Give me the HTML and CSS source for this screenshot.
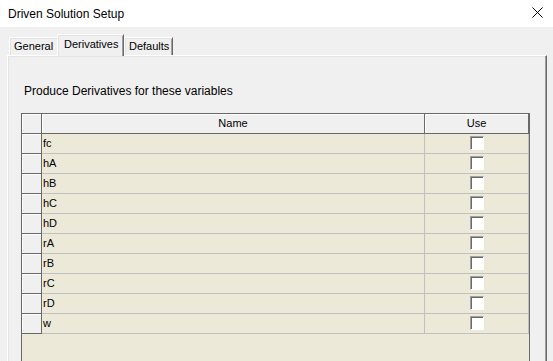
FILE: index.html
```html
<!DOCTYPE html>
<html lang="en">
<head>
  <meta charset="UTF-8">
  <title>Driven Solution Setup</title>
  <link rel="stylesheet" href="styles.css">
</head>
<body>
  <!-- Title bar -->
  <div class="titlebar">
    <span class="title">Driven Solution Setup</span>
    <svg class="close" width="11" height="11" viewBox="0 0 11 11">
      <path d="M0.5 0.5 L10.5 10.5 M10.5 0.5 L0.5 10.5" stroke="#000" stroke-width="1" fill="none"/>
    </svg>
  </div>

  <!-- Tabs -->
  <div class="tabs">
    <div class="tab tab-general">General</div>
    <div class="tab tab-active">Derivatives</div>
    <div class="tab tab-defaults">Defaults</div>
  </div>

  <div class="panel">
    <div class="label">Produce Derivatives for these variables</div>

    <div class="grid">
      <div class="hd"></div>
      <div class="hd">Name</div>
      <div class="hd hd-last">Use</div>

      <div class="rh"></div><div class="cell">fc</div><div class="cell use"><span class="box"></span></div>
      <div class="rh"></div><div class="cell">hA</div><div class="cell use"><span class="box"></span></div>
      <div class="rh"></div><div class="cell">hB</div><div class="cell use"><span class="box"></span></div>
      <div class="rh"></div><div class="cell">hC</div><div class="cell use"><span class="box"></span></div>
      <div class="rh"></div><div class="cell">hD</div><div class="cell use"><span class="box"></span></div>
      <div class="rh"></div><div class="cell">rA</div><div class="cell use"><span class="box"></span></div>
      <div class="rh"></div><div class="cell">rB</div><div class="cell use"><span class="box"></span></div>
      <div class="rh"></div><div class="cell">rC</div><div class="cell use"><span class="box"></span></div>
      <div class="rh"></div><div class="cell">rD</div><div class="cell use"><span class="box"></span></div>
      <div class="rh"></div><div class="cell">w</div><div class="cell use"><span class="box"></span></div>
    </div>
  </div>
</body>
</html>
```

FILE: styles.css
```css
html, body {
  margin: 0;
  height: 100%;
  overflow: hidden;
}
body {
  background: #f0f0f0;
  font-family: "Liberation Sans", Arial, sans-serif;
  font-size: 11px;
  color: #000;
}
.titlebar {
  height: 27px;
  background: #ffffff;
  display: flex;
  align-items: center;
  justify-content: space-between;
  padding: 0 10px 0 8px;
}
.title {
  font-size: 12px;
}
.close {
  display: block;
  margin-top: -2px;
}
.tabs {
  display: flex;
  align-items: flex-end;
  padding-left: 9px;
  margin-top: 7px;
  height: 21px;
}
.tab {
  box-sizing: border-box;
  height: 18px;
  line-height: 17px;
  background: #f0f0f0;
  border-top: 1px solid #ffffff;
  border-left: 1px solid #ffffff;
  box-shadow: inset 1px 1px #e3e3e3;
  padding-left: 4px;
}
.tab-general {
  width: 48px;
}
.tab-active {
  position: relative;
  z-index: 1;
  width: 67px;
  height: 22px;
  margin-bottom: -1px;
  padding-left: 6px;
  line-height: 19px;
  border-right: 1px solid #696969;
  box-shadow: inset 1px 1px #e3e3e3, inset -1px 0 #a0a0a0;
}
.tab-defaults {
  width: 49px;
  border-right: 1px solid #696969;
  box-shadow: inset 1px 1px #e3e3e3, inset -1px 0 #a0a0a0;
}
.panel {
  box-sizing: border-box;
  width: 540px;
  margin-left: 7px;
  height: 320px;
  border-top: 1px solid #ffffff;
  border-left: 1px solid #ffffff;
  border-right: 1px solid #696969;
  box-shadow: inset -1px 0 #a0a0a0, inset 1px 1px #e3e3e3;
  padding: 29px 0 0 13px;
}
.label {
  font-size: 12px;
  line-height: 12px;
  margin-bottom: 16px;
  padding-left: 3px;
}
.grid {
  display: grid;
  grid-template-columns: 20px 383px 104px;
  grid-auto-rows: 20px;
  align-content: start;
  width: 507px;
  height: 260px;
  border: 1px solid #696969;
  border-bottom: none;
  background: #ece9d8;
}
.hd, .rh {
  box-sizing: border-box;
  background: #f0f0f0;
  border-right: 1px solid #696969;
  border-bottom: 1px solid #696969;
  box-shadow: inset 1px 1px #ffffff;
}
.hd {
  text-align: center;
  line-height: 19px;
}
.cell {
  box-sizing: border-box;
  border-right: 1px solid #c0c0c0;
  border-bottom: 1px solid #c0c0c0;
  padding-left: 1px;
  line-height: 19px;
}
.use {
  display: flex;
  justify-content: center;
  padding-left: 0;
}
.box {
  box-sizing: border-box;
  width: 14px;
  height: 14px;
  margin-top: 2px;
  background: #ffffff;
  border: 1px solid;
  border-color: #a0a0a0 #ffffff #ffffff #a0a0a0;
  box-shadow: inset 1px 1px #696969;
}
```
